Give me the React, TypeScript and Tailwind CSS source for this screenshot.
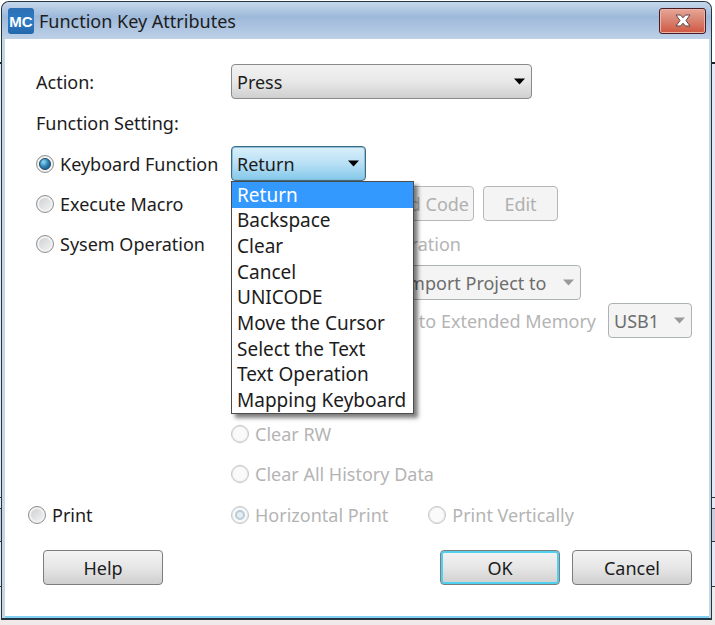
import React, { useState } from "react";
import clsx from "clsx";

const KEYBOARD_FUNCTIONS = [
  "Return",
  "Backspace",
  "Clear",
  "Cancel",
  "UNICODE",
  "Move the Cursor",
  "Select the Text",
  "Text Operation",
  "Mapping Keyboard",
];

/** radio */
type RadioProps = {
  name: string;
  label: string;
  checked?: boolean;
  disabled?: boolean;
  onSelect?: () => void;
};

function Radio({ name, label, checked = false, disabled = false, onSelect }: RadioProps) {
  return (
    <label className={clsx("flex items-center gap-1.5 whitespace-nowrap", disabled && "text-[#b4b4b4]")}>
      <span className="grid shrink-0 place-items-center">
        <input
          type="radio"
          name={name}
          checked={checked}
          disabled={disabled}
          onChange={() => onSelect?.()}
          className={clsx(
            "col-start-1 row-start-1 size-[18px] appearance-none rounded-full border",
            disabled
              ? "border-[#c4c4c4] bg-[#fafafa] shadow-[inset_0_0_0_1px_#e8e8e8]"
              : "border-[#8e8f8f] bg-linear-to-br from-[#c9cccf] to-[#f6f6f6] shadow-[inset_0_0_0_2px_#f2f2f2]"
          )}
        />
        {checked && (
          <span
            className={clsx(
              "pointer-events-none col-start-1 row-start-1 rounded-full",
              disabled
                ? "size-2.5 border-2 border-[#b9cbd6] bg-[#e3edf3]"
                : "size-3 border border-[#1c4768] bg-radial-[at_35%_30%] from-[#8fdcf7] via-[#2d7fb2] to-[#174a72]"
            )}
          />
        )}
      </span>
      {label}
    </label>
  );
}

/** drop-down */
type DropProps = {
  label: string;
  value: string;
  options: string[];
  tone?: "normal" | "open" | "disabled";
  className?: string;
  onChange?: (v: string) => void;
};

function Drop({ label, value, options, tone = "normal", className, onChange }: DropProps) {
  return (
    <div className={clsx("grid shrink-0 items-center", className)}>
      <select
        aria-label={label}
        value={value}
        disabled={tone === "disabled"}
        onChange={(e) => onChange?.(e.target.value)}
        className={clsx(
          "col-start-1 row-start-1 h-[35px] w-full appearance-none rounded-[4px] border pl-[5px] opacity-100",
          tone === "normal" && "border-[#8a8a8a] bg-linear-to-b from-[#f2f2f2] via-[#e8e8e8] to-[#cfcfcf]",
          tone === "open" &&
            "border-[#3c6b85] bg-linear-to-b from-[#d9effa] from-0% via-[#b8e0f5] via-50% to-[#83c8ea] shadow-[inset_0_0_0_1px_#8fbfd6]",
          tone === "disabled" && "border-[#adb2b5] bg-[#f4f4f4] text-[#6d6d6d]"
        )}
      >
        {options.map((o) => (
          <option key={o}>{o}</option>
        ))}
      </select>
      <svg
        viewBox="0 0 11 7"
        className={clsx(
          "pointer-events-none col-start-1 row-start-1 mr-[7px] h-[7px] w-[11px] justify-self-end",
          tone === "disabled" ? "fill-[#9a9a9a]" : "fill-black"
        )}
      >
        <path d="M0 0.5h11L5.500 6.500z" />
      </svg>
    </div>
  );
}

const buttonBase = "h-[35px] rounded-[4px] border";
const buttonNormal = "border-[#7d7d7d] bg-linear-to-b from-[#f3f3f3] from-0% via-[#e6e6e6] via-50% to-[#cfcfcf]";
const buttonDisabled = "border-[#b4b8ba] bg-[#f4f4f4] text-[#b0b0b0]";

export default function App() {
  const [source, setSource] = useState("keyboard");
  const [action, setAction] = useState("Press");
  const [keyFn, setKeyFn] = useState("Return");

  return (
    <div className="min-h-screen bg-[linear-gradient(#fff_62px,#222_62px,#222_64px,#e9e5f1_64px,#e9e5f1_497px,#333_497px,#333_498px,#e9e5f1_498px,#e9e5f1_508px,#333_508px,#333_509px,#cfcad9_509px,#cfcad9_541px,#333_541px,#333_542px,#e9e5f1_542px,#e9e5f1_586px,#333_586px,#333_587px,#f0ebea_587px)] pt-px pr-[3px] pb-[4px] pl-px font-['Noto_Sans','Open_Sans',sans-serif] text-[18px] leading-6 text-[#1c1c1c]">
      <div className="flex min-h-[619px] flex-col rounded-t-lg border border-b-2 border-[#243440] bg-[#c3d6e6]">
        {/* title bar */}
        <header className="flex h-[37px] shrink-0 items-center rounded-t-lg bg-linear-to-b from-[#c6d7ea] from-0% via-[#9db9da] via-40% to-[#bdd0e7] pr-[5px] pl-[6px]">
          <svg viewBox="0 0 26 26" className="size-[26px]">
            <defs>
              <linearGradient id="mc" x1="0" y1="0" x2="0" y2="1">
                <stop offset="0" stopColor="#2e6fb4" />
                <stop offset="0.5" stopColor="#2b7bc4" />
                <stop offset="1" stopColor="#2467ab" />
              </linearGradient>
            </defs>
            <rect width="26" height="26" rx="3" fill="url(#mc)" />
            <text x="13" y="19" textAnchor="middle" fill="#fff" className="font-['Liberation_Sans',sans-serif] text-[15px] font-bold">
              MC
            </text>
          </svg>
          <h1 className="ml-[5px] flex-1">Function Key Attributes</h1>
          <button
            type="button"
            aria-label="Close"
            className="grid h-[26px] w-[47px] place-items-center rounded-[3px] border border-[#4a1c22] bg-linear-to-b from-[#e7a597] from-0% via-[#d98472] via-45% to-[#cf5540] shadow-[inset_0_0_0_1px_#eab5a8]"
          >
            <svg viewBox="0 0 16 13" className="h-[13px] w-4">
              <path
                d="M1 1h4.500L8 3.800 10.500 1H15l-4 5.500L15 12h-4.500L8 9.200 5.500 12H1l4-5.500z"
                fill="#fff"
                stroke="#5a4348"
                strokeWidth="1"
              />
            </svg>
          </button>
        </header>

        <main className="mr-[2px] ml-[3px] flex flex-1 flex-col border-b-2 border-[#7fd0f2] bg-white pr-[17px] pb-[31px] pl-[31px]">
          <div className="mt-[25px] flex items-center">
            <span className="w-[195px]">Action:</span>
            <Drop label="Action" value={action} options={["Press", "Release"]} onChange={setAction} className="w-[301px]" />
          </div>
          <h2 className="mt-3">Function Setting:</h2>

          <div className="mt-[11px] flex items-center">
            <div className="w-[195px]">
              <Radio name="source" label="Keyboard Function" checked={source === "keyboard"} onSelect={() => setSource("keyboard")} />
            </div>
            <div className="relative w-[135px]">
              <Drop label="Keyboard Function" value={keyFn} options={KEYBOARD_FUNCTIONS} tone="open" onChange={setKeyFn} />
              <ul
                role="listbox"
                aria-label="Keyboard Function"
                className="absolute top-full left-0 z-10 grid h-[233px] w-[183px] auto-rows-fr border border-[#4c4c4c] bg-white text-[19px] shadow-[4px_4px_4px_#00000080]"
              >
                {KEYBOARD_FUNCTIONS.map((fn) => (
                  <li
                    key={fn}
                    role="option"
                    aria-selected={fn === keyFn}
                    onClick={() => setKeyFn(fn)}
                    className={clsx("flex items-center pl-[5px] whitespace-nowrap", fn === keyFn && "bg-[#3399ff] text-white")}
                  >
                    {fn}
                  </li>
                ))}
              </ul>
            </div>
          </div>

          <div className="mt-[5px] flex items-center">
            <div className="w-[195px]">
              <Radio name="source" label="Execute Macro" checked={source === "macro"} onSelect={() => setSource("macro")} />
            </div>
            <div className="flex w-[327px] justify-end gap-[9px]">
              <button type="button" disabled className={clsx(buttonBase, buttonDisabled, "px-1")}>
                Add Code
              </button>
              <button type="button" disabled className={clsx(buttonBase, buttonDisabled, "w-[75px]")}>
                Edit
              </button>
            </div>
          </div>

          <div className="mt-[11px] flex items-center">
            <div className="w-[195px]">
              <Radio name="source" label="Sysem Operation" checked={source === "system"} onSelect={() => setSource("system")} />
            </div>
            <div className="flex w-[230px] justify-end">
              <Radio name="system" label="Project Operation" disabled />
            </div>
          </div>
          <div className="mt-[9px] flex pl-[195px]">
            <div className="flex w-[350px] justify-end">
              <Drop label="Project operation" value="Import Project to" options={["Import Project to"]} tone="disabled" className="w-[185px]" />
            </div>
          </div>
          <div className="mt-[3px] flex items-center justify-end gap-3">
            <Radio name="system" label="Copy to Extended Memory" disabled />
            <Drop label="Memory" value="USB1" options={["USB1"]} tone="disabled" className="w-[84px]" />
          </div>

          <div className="mt-[84px] flex flex-col gap-4 pl-[195px]">
            <Radio name="system" label="Clear RW" disabled />
            <Radio name="system" label="Clear All History Data" disabled />
          </div>
          <div className="mt-[17px] -ml-2 flex items-center">
            <div className="w-[203px]">
              <Radio name="source" label="Print" checked={source === "print"} onSelect={() => setSource("print")} />
            </div>
            <div className="flex gap-10">
              <Radio name="print" label="Horizontal Print" checked disabled />
              <Radio name="print" label="Print Vertically" disabled />
            </div>
          </div>

          <footer className="mt-[23px] flex gap-3 pl-[7px]">
            <button type="button" className={clsx(buttonBase, buttonNormal, "mr-auto w-[120px]")}>
              Help
            </button>
            <button type="button" className={clsx(buttonBase, buttonNormal, "w-[120px] border-[#3c7f9c] shadow-[inset_0_0_0_2px_#4fd0ee]")}>
              OK
            </button>
            <button type="button" className={clsx(buttonBase, buttonNormal, "w-[120px]")}>
              Cancel
            </button>
          </footer>
        </main>
      </div>
    </div>
  );
}
